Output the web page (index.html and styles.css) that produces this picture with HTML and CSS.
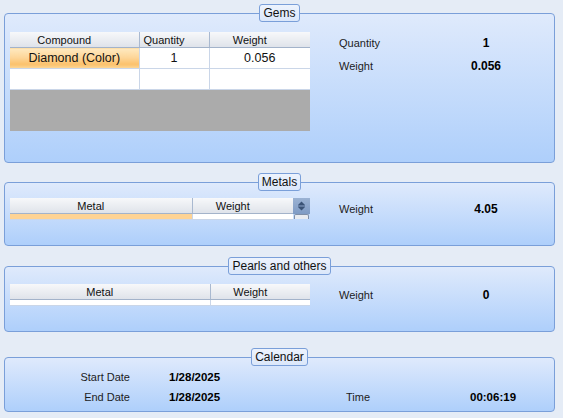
FILE: index.html
```html
<!DOCTYPE html>
<html lang="en">
<head>
    <meta charset="UTF-8">
    <title>Piece Details</title>
    <link rel="stylesheet" href="styles.css">
</head>
<body>
<div class="panel">
    <section class="group group-gems">
        <div class="legend"><span>Gems</span></div>
        <div class="box">
            <div class="grid grid-gems">
                <table>
                    <colgroup><col style="width:129px"><col style="width:70px"><col style="width:101px"></colgroup>
                    <thead>
                        <tr><th>Compound</th><th>Quantity</th><th>Weight</th></tr>
                    </thead>
                    <tbody>
                        <tr class="row"><td class="selected big">Diamond (Color)</td><td class="big">1</td><td class="big">0.056</td></tr>
                        <tr class="row"><td></td><td></td><td></td></tr>
                    </tbody>
                </table>
                <div class="empty-area"></div>
            </div>
            <div class="info">
                <span class="label">Quantity</span><span class="value">1</span>
                <span class="label">Weight</span><span class="value">0.056</span>
            </div>
        </div>
    </section>

    <section class="group group-metals">
        <div class="legend"><span>Metals</span></div>
        <div class="box">
            <div class="grid grid-metals">
                <table>
                    <colgroup><col style="width:182px"><col style="width:101px"></colgroup>
                    <thead>
                        <tr><th>Metal</th><th>Weight</th></tr>
                    </thead>
                    <tbody>
                        <tr class="row-cut"><td class="selected-flat"></td><td></td></tr>
                    </tbody>
                </table>
                <div class="scroller">
                    <div class="scroll-btn">
                        <svg width="17" height="16" viewBox="0 0 17 16">
                            <path d="M5 7 L8.5 3.5 L12 7 Z" fill="#3b5376"/>
                            <rect x="5" y="7.5" width="7" height="1" fill="#3b5376"/>
                            <path d="M5 9 L12 9 L8.5 12.5 Z" fill="#3b5376"/>
                        </svg>
                    </div>
                    <div class="scroll-thumb"></div>
                </div>
            </div>
            <div class="info">
                <span class="label">Weight</span><span class="value">4.05</span>
            </div>
        </div>
    </section>

    <section class="group group-pearls">
        <div class="legend"><span>Pearls and others</span></div>
        <div class="box">
            <div class="grid grid-pearls">
                <table>
                    <colgroup><col style="width:200px"><col style="width:100px"></colgroup>
                    <thead>
                        <tr><th>Metal</th><th>Weight</th></tr>
                    </thead>
                    <tbody>
                        <tr class="row-cut"><td></td><td></td></tr>
                    </tbody>
                </table>
            </div>
            <div class="info">
                <span class="label">Weight</span><span class="value">0</span>
            </div>
        </div>
    </section>

    <section class="group group-calendar">
        <div class="legend"><span>Calendar</span></div>
        <div class="box">
            <div class="calendar">
                <span class="cal-label">Start Date</span>
                <span class="cal-value">1/28/2025</span>
                <span></span><span></span>
                <span class="cal-label">End Date</span>
                <span class="cal-value">1/28/2025</span>
                <span class="time-label">Time</span>
                <span class="time-value">00:06:19</span>
            </div>
        </div>
    </section>
</div>
</body>
</html>
```

FILE: styles.css
```css
body {
    margin: 0;
    background: #e5ecf6;
    font-family: "Liberation Sans", Arial, sans-serif;
    font-size: 11px;
    color: #1c1c1c;
}

.panel {
    width: 551px;
    padding: 4px 8px 0 4px;
    display: flex;
    flex-direction: column;
}

.group-metals { margin-top: 10px; }
.group-pearls { margin-top: 11px; }
.group-calendar { margin-top: 16px; }

/* tab that sits on the top border */
.legend {
    display: flex;
    justify-content: center;
    height: 18px;
    margin-bottom: -9px;
    position: relative;
    z-index: 1;
}

.legend span {
    height: 16px;
    line-height: 16px;
    padding: 0 3px;
    border: 1px solid #7a9fd9;
    border-radius: 3px;
    background: linear-gradient(#edf3fd, #dbe7fa);
    font-size: 12px;
    color: #111;
}

.box {
    box-sizing: border-box;
    border: 1px solid #7a9fd9;
    border-radius: 4px;
    background: linear-gradient(#dfeafc, #aecffb);
    padding-left: 5px;
    display: flex;
    align-items: flex-start;
}

.group-gems .box { height: 150px; padding-top: 18px; }
.group-metals .box { height: 64px; padding-top: 15px; }
.group-pearls .box { height: 66px; padding-top: 17px; }
.group-calendar .box { height: 55px; padding-top: 9px; }

/* data grids */
.grid {
    width: 300px;
    background: #fff;
}

.grid table {
    border-collapse: collapse;
    table-layout: fixed;
    width: 100%;
}

.grid th {
    height: 15px;
    padding: 0 20px 0 0;
    font-weight: normal;
    font-size: 11px;
    text-align: center;
    color: #111;
    background: linear-gradient(#f7f8fa, #dfe3ea);
    border-bottom: 1px solid #a3b3ca;
    border-right: 1px solid #a9b9d0;
    white-space: nowrap;
    overflow: hidden;
}

.grid th:last-child { border-right: none; }

.grid td {
    padding: 0;
    text-align: center;
    border-right: 1px solid #cad6e8;
    border-bottom: 1px solid #cad6e8;
}

.grid td:last-child { border-right: none; }

.row td { height: 20px; }

.big {
    font-size: 12.5px;
    color: #111;
}

.selected {
    background: linear-gradient(#fee9c0 0%, #fdd699 45%, #fbc16b 80%, #fcd99b 100%);
}

.selected-flat { background: #fed394; }

.empty-area {
    height: 41px;
    background: #ababab;
}

.grid-metals {
    display: flex;
    width: 300px;
    background: transparent;
}

.grid-metals table { width: 283px; background: #fff; }

.row-cut td { height: 5px; }

.scroller {
    width: 17px;
    display: flex;
    flex-direction: column;
}

.scroll-btn {
    height: 16px;
    background: linear-gradient(#9bb2d3, #7f9bc4);
}

.scroll-btn svg { display: block; }

.scroll-thumb {
    height: 5px;
    box-sizing: border-box;
    margin: 0 1px;
    border: 1px solid #7f8fa8;
    border-bottom: none;
    border-radius: 2px 2px 0 0;
    background: #e8ebf0;
}

.grid-pearls table { background: #fff; }

/* label / value pairs on the right */
.info {
    margin-left: 29px;
    display: grid;
    grid-template-columns: 117px 60px;
    line-height: 23px;
}

.info .value {
    text-align: center;
    font-weight: bold;
    font-size: 12px;
    color: #000;
}

.calendar {
    display: grid;
    grid-template-columns: 120px 216px 124px auto;
    line-height: 20px;
}

.cal-label { text-align: right; }

.cal-value {
    padding-left: 39px;
    font-weight: bold;
    font-size: 11.5px;
    color: #000;
}

.time-value {
    font-weight: bold;
    font-size: 11.5px;
    color: #000;
}
```
